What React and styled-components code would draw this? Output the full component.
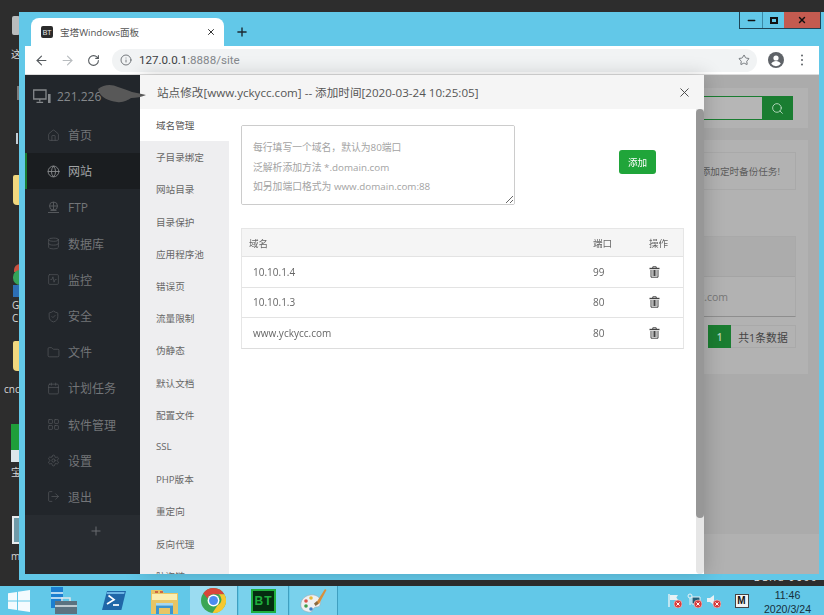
import React from "react"
import styled, { createGlobalStyle } from "styled-components"
import {
  ArrowLeft,
  ArrowRight,
  Calendar,
  Database,
  Folder,
  Globe,
  Home,
  Info,
  LayoutGrid,
  LogOut,
  Minus,
  Plus,
  RotateCw,
  Search,
  Settings,
  ShieldCheck,
  SquareActivity,
  Star,
  X,
} from "lucide-react"

const fonts = `"Open Sans", "Noto Sans CJK SC", sans-serif`

const colors = {
  sky: "#62c8e8",
  desk: "#2d2d2d",
  green: "#20a53a",
  dimGreen: "#1a7d31",
  side: "#22262b",
}

const GlobalStyle = createGlobalStyle`
  html, body {
    margin: 0;
    padding: 0;
    background: ${colors.desk};
  }
  * {
    box-sizing: border-box;
  }
`

const Desktop = styled.div`
  position: relative;
  width: 824px;
  height: 615px;
  display: flex;
  flex-direction: column;
  overflow: hidden;
  background: ${colors.desk};
  font-family: ${fonts};
`

const DeskArea = styled.div`
  flex: 1;
  min-height: 0;
  padding: 12px 0 6px 19px;
`

const DeskItem = styled.div`
  position: absolute;
  left: ${(p) => p.$left}px;
  top: ${(p) => p.$top}px;
  width: ${(p) => p.$w}px;
  height: ${(p) => p.$h}px;
  background: ${(p) => p.$bg || "transparent"};
  border-radius: ${(p) => p.$round || "0"};
`

const DeskLabel = styled.div`
  position: absolute;
  left: ${(p) => p.$left}px;
  top: ${(p) => p.$top}px;
  color: #d8d8d8;
  font-size: 10px;
  line-height: 12px;
  white-space: nowrap;
`

const BuildMark = styled.div`
  position: absolute;
  right: 6px;
  top: 571px;
  color: #e8e8e8;
  font-size: 10px;
  line-height: 12px;
  letter-spacing: 1.5px;
  white-space: nowrap;
`

const BrowserWindow = styled.div`
  position: relative;
  z-index: 1;
  width: 805px;
  height: 100%;
  padding: 0 5px 6px 6px;
  display: flex;
  flex-direction: column;
  background: ${colors.sky};
`

const TabStrip = styled.div`
  height: 34px;
  flex: none;
  display: flex;
  align-items: flex-end;
  padding-left: 6px;
`

const Tab = styled.div`
  width: 193px;
  height: 28px;
  display: flex;
  align-items: center;
  padding: 0 8px 0 10px;
  background: #fff;
  border-radius: 8px 8px 0 0;
  color: #555;
  font-size: 9.6px;
`

const Favicon = styled.span`
  width: 12px;
  height: 12px;
  margin-right: 7px;
  border-radius: 2px;
  background: #2b2b2b;
  color: #eee;
  font-size: 7.5px;
  line-height: 12px;
  text-align: center;
`

const TabTitle = styled.span`
  flex: 1;
`

const NewTab = styled.span`
  display: flex;
  align-self: center;
  margin: 6px 0 0 11px;
  color: #1c2a33;
`

const WindowControls = styled.div`
  display: flex;
  align-self: flex-start;
  height: 17px;
  margin: 0 -2px 0 auto;
  border: 1px solid #1d4557;
  border-top: 0;
`

const ControlButton = styled.div`
  width: ${(p) => (p.$close ? "36px" : "22px")};
  display: flex;
  align-items: center;
  justify-content: center;
  background: ${(p) => (p.$close ? "#c45b50" : "transparent")};
  border-left: ${(p) => (p.$first || p.$close ? "0" : "1px solid #3b8aa6")};
  color: #111;
`

const MaxGlyph = styled.span`
  width: 8px;
  height: 7px;
  border: 2px solid #111;
`

const Toolbar = styled.div`
  height: 29px;
  flex: none;
  display: flex;
  align-items: center;
  background: #fff;
  border-bottom: 1px solid #dcdcdc;
  padding-left: 3px;
`

const NavButton = styled.span`
  width: 26px;
  display: flex;
  justify-content: center;
  color: ${(p) => (p.$off ? "#b8bcbf" : "#555a5e")};
`

const AddressBar = styled.div`
  width: 645px;
  height: 23px;
  flex: none;
  display: flex;
  align-items: center;
  margin-left: 6px;
  padding: 0 7px 0 8px;
  border-radius: 12px;
  background: #f1f3f4;
  color: #5f6368;
  font-family: "Roboto", sans-serif;
  font-size: 11.6px;
`

const Url = styled.span`
  flex: 1;
  margin-left: 7px;
  color: #85898d;

  b {
    font-weight: 400;
    color: #3c3f43;
  }
`

const ToolIcon = styled.span`
  width: ${(p) => p.$w}px;
  display: flex;
  justify-content: center;
  color: #5f6368;
`

const Dots = styled.span`
  width: 2.4px;
  height: 2.4px;
  border-radius: 50%;
  background: #5f6368;
  box-shadow: 0 -4.5px 0 #5f6368, 0 4.5px 0 #5f6368;
`

const Content = styled.div`
  position: relative;
  flex: 1;
  min-height: 0;
  display: flex;
`

const Sidebar = styled.aside`
  position: relative;
  z-index: 3;
  width: 115px;
  flex: none;
  display: flex;
  flex-direction: column;
  background: ${colors.side};
`

const SideHead = styled.div`
  position: relative;
  height: 42px;
  flex: none;
  display: flex;
  align-items: center;
  padding-left: 8px;
  color: #85888b;
  font-size: 12px;
`

const HeadIp = styled.span`
  margin-left: 6px;
`

const Smudge = styled.svg`
  position: absolute;
  left: 72px;
  top: 9px;
`

const NavList = styled.nav`
  flex: 1;
  display: flex;
  flex-direction: column;
`

const NavItem = styled.div`
  height: 36.2px;
  display: flex;
  align-items: center;
  gap: 8px;
  padding-left: ${(p) => (p.$active ? "20px" : "22px")};
  border-left: ${(p) => (p.$active ? `2px solid ${colors.dimGreen}` : "0")};
  background: ${(p) => (p.$active ? "#1a1d20" : "transparent")};
  color: ${(p) => (p.$active ? "#a2a4a6" : "#737578")};
  font-size: 12px;

  svg {
    flex: none;
    color: ${(p) => (p.$active ? "#8b8d90" : "#55585c")};
  }
`

const AddMenu = styled.div`
  height: 59px;
  flex: none;
  display: flex;
  justify-content: center;
  padding: 9px 0 0 27px;
  background: #282c31;
  color: #6e7175;
`

const Main = styled.main`
  flex: 1;
  min-width: 0;
  display: flex;
  flex-direction: column;
  background: #ababab;
`

const MainBody = styled.div`
  flex: 1;
  padding: 13px 11px 0 15px;
`

const SearchPanel = styled.div`
  height: 40px;
  display: flex;
  padding: 8px 15px;
  background: #b2b2b2;
`

const SearchInput = styled.div`
  flex: 1;
  border: 1px solid ${colors.dimGreen};
  border-right: 0;
  background: #b6b6b6;
`

const SearchButton = styled.div`
  width: 31px;
  display: flex;
  align-items: center;
  justify-content: center;
  background: ${colors.dimGreen};
  color: #b8d8c0;
`

const ListPanel = styled.div`
  height: 234px;
  margin-top: 12px;
  padding: 12px;
  background: #b2b2b2;
`

const Notice = styled.div`
  height: 38px;
  display: flex;
  align-items: center;
  justify-content: flex-end;
  padding-right: 15px;
  border: 1px solid #a9a9a9;
  color: #5c5c5c;
  font-size: 9.6px;
`

const BackTable = styled.div`
  height: 81px;
  margin-top: 46px;
  border: 1px solid #a9a9a9;
  border-bottom: 1px solid #8e8e8e;
`

const BackHead = styled.div`
  height: 40px;
  background: #acacac;
  border-bottom: 1px solid #a4a4a4;
`

const BackRow = styled.div`
  height: 39px;
  display: flex;
  align-items: center;
  justify-content: flex-end;
  padding-right: 67px;
  color: #777;
  font-size: 10.5px;
`

const Pager = styled.div`
  height: 23px;
  margin-top: 8px;
  display: flex;
  justify-content: flex-end;
`

const PagerNow = styled.span`
  width: 23px;
  display: flex;
  align-items: center;
  justify-content: center;
  background: ${colors.dimGreen};
  color: #b5d3bc;
  font-size: 10px;
  font-weight: 600;
`

const PagerInfo = styled.span`
  width: 65px;
  display: flex;
  align-items: center;
  justify-content: center;
  border: 1px solid #a9a9a9;
  border-left: 0;
  color: #444;
  font-size: 10.8px;
`

const MainFooter = styled.div`
  height: 40px;
  flex: none;
  background: #b1b1b1;
`

const Modal = styled.section`
  position: absolute;
  z-index: 2;
  left: 115px;
  top: 0;
  bottom: 0;
  width: 564px;
  display: flex;
  flex-direction: column;
  background: #fff;
  box-shadow: 2px 0 18px rgba(0, 0, 0, 0.18);
`

const ModalHead = styled.header`
  height: 34px;
  flex: none;
  display: flex;
  align-items: center;
  justify-content: space-between;
  padding: 0 12px 0 17px;
  background: #f5f5f5;
  color: #555;
  font-size: 11.6px;
`

const CloseButton = styled.span`
  display: flex;
  color: #444;
`

const ModalBody = styled.div`
  flex: 1;
  min-height: 0;
  display: flex;
`

const SideMenu = styled.ul`
  width: 89px;
  flex: none;
  margin: 0;
  padding: 0;
  list-style: none;
  overflow: hidden;
  background: #eeeef0;
`

const MenuItem = styled.li`
  height: 32.2px;
  display: flex;
  align-items: center;
  padding-left: 16px;
  flex: none;
  background: ${(p) => (p.$active ? "#fff" : "transparent")};
  color: ${(p) => (p.$active ? "#555" : "#666")};
  font-size: 9.6px;
`

const Pane = styled.div`
  flex: 1;
  min-width: 0;
  padding: 16px 12px 0;
`

const AddRow = styled.div`
  display: flex;
  align-items: flex-start;
`

const DomainInput = styled.textarea`
  width: 274px;
  height: 80px;
  flex: none;
  margin: 0;
  padding: 12px 11px;
  border: 1px solid #ccc;
  border-radius: 2px;
  outline: none;
  background: #fff;
  font-family: ${fonts};
  font-size: 9.8px;
  line-height: 19.6px;

  &::placeholder {
    color: #a3a3a3;
    opacity: 1;
  }
`

const AddButton = styled.button`
  width: 37px;
  height: 24px;
  margin: 25px 0 0 104px;
  padding: 0;
  border: 0;
  border-radius: 3px;
  background: ${colors.green};
  color: #fff;
  font-family: ${fonts};
  font-size: 9.6px;
`

const DomainTable = styled.div`
  width: 443px;
  margin-top: 23px;
  border: 1px solid #e6e6e6;
  border-bottom-color: #ddd;
`

const TableRow = styled.div`
  height: ${(p) => (p.$head ? "27px" : "30.6px")};
  display: grid;
  grid-template-columns: 344px 56px 1fr;
  align-items: center;
  padding-left: 7px;
  background: ${(p) => (p.$head ? "#f5f5f5" : "#fff")};
  border-top: ${(p) => (p.$head ? "0" : "1px solid #e3e3e3")};
  color: #666;
  font-size: ${(p) => (p.$head ? "9.6px" : "10px")};
`

const NameCell = styled.span`
  padding-left: ${(p) => (p.$head ? "0" : "4px")};
`

const ActionCell = styled.span`
  display: flex;
`

const ScrollTrack = styled.div`
  width: 8px;
  flex: none;
  background: #e6e6e6;
  border-radius: 0 0 4px 4px;
`

const ScrollThumb = styled.div`
  height: 409px;
  border-radius: 4px;
  background: #979797;
`

const Taskbar = styled.footer`
  position: relative;
  z-index: 1;
  height: 29px;
  flex: none;
  display: flex;
  align-items: center;
  background: ${colors.sky};
`

const StartSlot = styled.span`
  width: ${(p) => p.$w}px;
  height: 100%;
  flex: none;
  display: flex;
  align-items: center;
  justify-content: center;
`

const RunningSlot = styled(StartSlot)`
  background: ${(p) => (p.$hot ? "#9bdcf1" : "#79d1ec")};
  border-right: 1px solid #3f9fc0;
  margin-right: 1px;
`

const BtTile = styled.span`
  width: 25px;
  height: 24px;
  display: flex;
  align-items: center;
  justify-content: center;
  background: #052d10;
  border: 2px solid #1fae3d;
  color: #1fae3d;
  font-family: "Liberation Sans", sans-serif;
  font-size: 12px;
  font-weight: 700;
  letter-spacing: 1px;
`

const Tray = styled.div`
  height: 100%;
  margin-left: auto;
  display: flex;
  align-items: center;
`

const TrayIcon = styled.span`
  width: ${(p) => p.$w || 19.5}px;
  display: flex;
  justify-content: center;
`

const ImeBox = styled.span`
  width: 14px;
  height: 14px;
  margin: 0 2.5px 0 11px;
  display: flex;
  align-items: center;
  justify-content: center;
  background: #f4f4f4;
  border: 1px solid #444;
  color: #111;
  font-family: "Liberation Sans", sans-serif;
  font-size: 10px;
  font-weight: 700;
`

const Clock = styled.div`
  width: 73px;
  margin-top: 3px;
  color: #16303c;
  font-family: "Liberation Sans", sans-serif;
  font-size: 10.6px;
  line-height: 14px;
  text-align: center;
`

const TrashIcon = () => (
  <svg width="11" height="12" viewBox="0 0 11 12" fill="none" stroke="#444">
    <path d="M0.5 2.5h10" strokeWidth="1.4" />
    <path d="M3.8 2V0.8h3.4V2" strokeWidth="1" />
    <path d="M2 4v7.2h7V4M4.1 4v6M5.5 4v6M6.9 4v6" strokeWidth="1" />
  </svg>
)

const FtpIcon = () => (
  <svg width="13" height="13" viewBox="0 0 13 13" fill="none" stroke="currentColor">
    <circle cx="6.5" cy="5" r="4" />
    <path d="M2.5 5h8M6.5 1v8M1 11.5h11M3.5 9.5h6" />
  </svg>
)

const ServerMonitor = () => (
  <svg width="18" height="15" viewBox="0 0 18 15" fill="none" stroke="currentColor">
    <path d="M0.7 1h12.3v9H0.7z" strokeWidth="1.3" />
    <path d="M6.8 10v2.5M3.5 13.4h6.6" strokeWidth="1.3" />
    <path d="M15 5h2.6v9H15z" fill="currentColor" stroke="none" />
  </svg>
)

const AvatarIcon = () => (
  <svg width="16" height="16" viewBox="0 0 16 16">
    <circle cx="8" cy="8" r="8" fill="#5f6368" />
    <circle cx="8" cy="6" r="2.6" fill="#fff" />
    <path d="M3.2 11.8c1-1.9 3-2.7 4.8-2.7s3.8.8 4.8 2.7a6 6 0 0 1-9.6 0z" fill="#fff" />
  </svg>
)

const WindowsLogo = () => (
  <svg width="22" height="22" viewBox="0 0 22 22" fill="#f4fbfe">
    <path d="M0 3.2 9 2v8.4H0zM10 1.8 22 0v10.4H10zM0 11.6h9V20L0 18.8zM10 11.6h12V22l-12-1.8z" />
  </svg>
)

const ServerManager = () => (
  <svg width="27" height="27" viewBox="0 0 27 27">
    <path d="M1 0h12v21H1z" fill="#1c7fd0" />
    <path d="M1 6h12M1 11h12" stroke="#e8f6fc" strokeWidth="1.4" />
    <path d="M5 14h22v13H5z" fill="#5b7280" />
    <path d="M12 14v-3h8v3" fill="none" stroke="#dfe7ea" strokeWidth="1.5" />
    <path d="M5 19h22" stroke="#d8e0e4" strokeWidth="1.6" />
  </svg>
)

const PowerShell = () => (
  <svg width="24" height="19" viewBox="0 0 24 19">
    <path d="M5 0h19l-4.6 19H0z" fill="#1f67a8" />
    <path d="M5 1h17.6l-.4 2H4.6z" fill="#6ab4e4" />
    <path d="M6.5 4.5 12 8.6 5 13" fill="none" stroke="#fff" strokeWidth="1.7" />
    <path d="M11 14h6" stroke="#fff" strokeWidth="1.7" />
  </svg>
)

const FolderIcon = () => (
  <svg width="27" height="27" viewBox="0 0 27 27">
    <path d="M0 3h11l2 3h14v21H0z" fill="#e8c565" />
    <path d="M1 7h25v6H1z" fill="#fbeeb2" />
    <path d="M4 5h3M9 5h3" stroke="#c2473b" strokeWidth="1.4" />
    <path d="M5 18h17v9h-3v-6H8v6H5z" fill="#3d95cf" />
    <path d="M5 16h17v2.6H5z" fill="#a8d7ef" />
  </svg>
)

const ChromeLogo = () => (
  <svg width="25" height="25" viewBox="0 0 24 24">
    <circle cx="12" cy="12" r="12" fill="#3aa655" />
    <path d="M12 0a12 12 0 0 1 10.4 6H12a6 6 0 0 0-5.7 4.1L2.2 5.1A12 12 0 0 1 12 0z" fill="#d9463a" />
    <path d="M22.4 6A12 12 0 0 1 11 24l4.9-7.5A6 6 0 0 0 17 6z" fill="#f6c82f" />
    <circle cx="12" cy="12" r="5.7" fill="#fff" />
    <circle cx="12" cy="12" r="4.3" fill="#4c8bf0" />
  </svg>
)

const PaintIcon = () => (
  <svg width="27" height="26" viewBox="0 0 27 26">
    <path d="M1 15c1-6 8-9 13-8 5 1 8 5 6 10-1 3-4 1-6 3s-1 5-6 4c-5-1-8-4-7-9z" fill="#eef0f2" stroke="#9aa7ae" strokeWidth="0.6" />
    <circle cx="6" cy="13" r="1.8" fill="#d9534a" />
    <circle cx="11" cy="10" r="1.8" fill="#e8b93a" />
    <circle cx="6" cy="18" r="1.8" fill="#3f9d4c" />
    <circle cx="11" cy="21" r="1.8" fill="#3d7fc9" />
    <path d="M16 15 25 1l1.5 1L19 16z" fill="#d88f3c" />
    <path d="M14 15.5 17 13l1.5 3-3 2z" fill="#8a6a3f" />
  </svg>
)

const BadgeX = () => (
  <>
    <circle cx="11" cy="11" r="4" fill="#d63b3b" stroke="#f3d5d5" strokeWidth="0.6" />
    <path d="M9.4 9.4l3.2 3.2M12.6 9.4l-3.2 3.2" stroke="#fff" strokeWidth="1" />
  </>
)

const FlagTray = () => (
  <svg width="15" height="15" viewBox="0 0 15 15">
    <path d="M2 1v13" stroke="#e8f2f5" strokeWidth="1.4" />
    <path d="M3 2h8l-1.6 2.5L11 7H3z" fill="#e8f2f5" />
    <BadgeX />
  </svg>
)

const NetworkTray = () => (
  <svg width="15" height="15" viewBox="0 0 15 15">
    <path d="M5 4h8v7H5z" fill="#1f5d78" stroke="#e8f2f5" />
    <circle cx="3" cy="3" r="2" fill="none" stroke="#e8f2f5" />
    <path d="M3 5v7" stroke="#e8f2f5" />
    <BadgeX />
  </svg>
)

const SpeakerTray = () => (
  <svg width="15" height="15" viewBox="0 0 15 15">
    <path d="M1 5h3l4-3v10L4 9H1z" fill="#e8f2f5" />
    <BadgeX />
  </svg>
)

const navItems = [
  { label: "首页", icon: <Home size={13} strokeWidth={1.3} /> },
  { label: "网站", icon: <Globe size={13} strokeWidth={1.6} />, active: true },
  { label: "FTP", icon: <FtpIcon /> },
  { label: "数据库", icon: <Database size={13} strokeWidth={1.3} /> },
  { label: "监控", icon: <SquareActivity size={13} strokeWidth={1.2} /> },
  { label: "安全", icon: <ShieldCheck size={13} strokeWidth={1.3} /> },
  { label: "文件", icon: <Folder size={13} strokeWidth={1.3} /> },
  { label: "计划任务", icon: <Calendar size={13} strokeWidth={1.3} /> },
  { label: "软件管理", icon: <LayoutGrid size={13} strokeWidth={1.3} /> },
  { label: "设置", icon: <Settings size={13} strokeWidth={1.3} /> },
  { label: "退出", icon: <LogOut size={13} strokeWidth={1.3} /> },
]

const menuItems = [
  "域名管理",
  "子目录绑定",
  "网站目录",
  "目录保护",
  "应用程序池",
  "错误页",
  "流量限制",
  "伪静态",
  "默认文档",
  "配置文件",
  "SSL",
  "PHP版本",
  "重定向",
  "反向代理",
  "防盗链",
]

const domains = [
  { name: "10.10.1.4", port: 99 },
  { name: "10.10.1.3", port: 80 },
  { name: "www.yckycc.com", port: 80 },
]

const App = () => {
  return (
    <Desktop>
      <GlobalStyle />

      <DeskItem $left={12} $top={16} $w={8} $h={19} $bg="#b9bcbd" $round="2px" />
      <DeskLabel $left={11} $top={48}>这</DeskLabel>
      <DeskItem $left={17} $top={86} $w={2} $h={14} $bg="#7d7d7d" />
      <DeskItem $left={16} $top={133} $w={2} $h={11} $bg="#c4ced6" />
      <DeskItem $left={13} $top={175} $w={7} $h={30} $bg="#f0d77e" $round="2px 0 0 4px" />
      <DeskItem $left={14} $top={264} $w={6} $h={8} $bg="#c9503f" $round="6px 0 0 0" />
      <DeskItem $left={13} $top={270} $w={7} $h={15} $bg="#35a35a" $round="7px 0 0 7px" />
      <DeskItem $left={13} $top={285} $w={7} $h={12} $bg="#2d6fb5" />
      <DeskLabel $left={12} $top={299}>G</DeskLabel>
      <DeskLabel $left={12} $top={312}>C</DeskLabel>
      <DeskItem $left={13} $top={341} $w={7} $h={30} $bg="#f0d77e" $round="2px 0 0 4px" />
      <DeskLabel $left={4} $top={383}>cnc</DeskLabel>
      <DeskItem $left={11} $top={424} $w={9} $h={26} $bg="#1f9e3a" />
      <DeskItem $left={11} $top={450} $w={9} $h={12} $bg="#dde6ea" />
      <DeskLabel $left={11} $top={466}>宝</DeskLabel>
      <DeskItem $left={12} $top={516} $w={8} $h={28} $bg="#e6ebee" />
      <DeskItem $left={14} $top={518} $w={6} $h={24} $bg="#6f9aa8" />
      <DeskLabel $left={11} $top={550}>m</DeskLabel>
      <BuildMark>Build 9600</BuildMark>

      <DeskArea>
        <BrowserWindow>
          <TabStrip>
            <Tab>
              <Favicon>BT</Favicon>
              <TabTitle>宝塔Windows面板</TabTitle>
              <X size={10} strokeWidth={2.4} color="#333" />
            </Tab>
            <NewTab>
              <Plus size={14} strokeWidth={2.4} />
            </NewTab>
            <WindowControls>
              <ControlButton $first>
                <Minus size={11} strokeWidth={3} />
              </ControlButton>
              <ControlButton>
                <MaxGlyph />
              </ControlButton>
              <ControlButton $close>
                <X size={10} strokeWidth={3.4} />
              </ControlButton>
            </WindowControls>
          </TabStrip>

          <Toolbar>
            <NavButton>
              <ArrowLeft size={15} strokeWidth={1.8} />
            </NavButton>
            <NavButton $off>
              <ArrowRight size={15} strokeWidth={1.8} />
            </NavButton>
            <NavButton>
              <RotateCw size={13} strokeWidth={2} />
            </NavButton>
            <AddressBar>
              <Info size={12} strokeWidth={1.7} />
              <Url>
                <b>127.0.0.1</b>:8888/site
              </Url>
              <Star size={12} strokeWidth={1.7} />
            </AddressBar>
            <ToolIcon $w={38}>
              <AvatarIcon />
            </ToolIcon>
            <ToolIcon $w={14}>
              <Dots />
            </ToolIcon>
          </Toolbar>

          <Content>
            <Sidebar>
              <SideHead>
                <ServerMonitor />
                <HeadIp>221.226</HeadIp>
                <Smudge width="50" height="20" viewBox="0 0 50 20">
                  <path
                    d="M1 5c6-5 14-5 20-2 5 2 10 3 14 5 5 1 10 2 14 3-4 2-10 3-15 3-3 2-8 5-14 4C12 17 3 14 1 5z"
                    fill="#585858"
                  />
                </Smudge>
              </SideHead>
              <NavList>
                {navItems.map((item) => (
                  <NavItem key={item.label} $active={item.active}>
                    {item.icon}
                    {item.label}
                  </NavItem>
                ))}
              </NavList>
              <AddMenu>
                <Plus size={14} strokeWidth={1.6} />
              </AddMenu>
            </Sidebar>

            <Main>
              <MainBody>
                <SearchPanel>
                  <SearchInput />
                  <SearchButton>
                    <Search size={13} strokeWidth={1.7} />
                  </SearchButton>
                </SearchPanel>
                <ListPanel>
                  <Notice>您当前未添加定时备份任务!</Notice>
                  <BackTable>
                    <BackHead />
                    <BackRow>www.yckycc.com</BackRow>
                  </BackTable>
                  <Pager>
                    <PagerNow>1</PagerNow>
                    <PagerInfo>共1条数据</PagerInfo>
                  </Pager>
                </ListPanel>
              </MainBody>
              <MainFooter />
            </Main>

            <Modal>
              <ModalHead>
                站点修改[www.yckycc.com] -- 添加时间[2020-03-24 10:25:05]
                <CloseButton>
                  <X size={15} strokeWidth={1.5} />
                </CloseButton>
              </ModalHead>
              <ModalBody>
                <SideMenu>
                  {menuItems.map((item, i) => (
                    <MenuItem key={item} $active={i === 0}>
                      {item}
                    </MenuItem>
                  ))}
                </SideMenu>
                <Pane>
                  <AddRow>
                    <DomainInput
                      readOnly
                      placeholder={
                        "每行填写一个域名，默认为80端口\n泛解析添加方法 *.domain.com\n如另加端口格式为 www.domain.com:88"
                      }
                    />
                    <AddButton>添加</AddButton>
                  </AddRow>
                  <DomainTable>
                    <TableRow $head>
                      <NameCell $head>域名</NameCell>
                      <span>端口</span>
                      <ActionCell>操作</ActionCell>
                    </TableRow>
                    {domains.map((d) => (
                      <TableRow key={d.name}>
                        <NameCell>{d.name}</NameCell>
                        <span>{d.port}</span>
                        <ActionCell>
                          <TrashIcon />
                        </ActionCell>
                      </TableRow>
                    ))}
                  </DomainTable>
                </Pane>
                <ScrollTrack>
                  <ScrollThumb />
                </ScrollTrack>
              </ModalBody>
            </Modal>
          </Content>
        </BrowserWindow>
      </DeskArea>

      <Taskbar>
        <StartSlot $w={38}>
          <WindowsLogo />
        </StartSlot>
        <StartSlot $w={50}>
          <ServerManager />
        </StartSlot>
        <StartSlot $w={51}>
          <PowerShell />
        </StartSlot>
        <StartSlot $w={51}>
          <FolderIcon />
        </StartSlot>
        <RunningSlot $w={48} $hot>
          <ChromeLogo />
        </RunningSlot>
        <RunningSlot $w={50}>
          <BtTile>BT</BtTile>
        </RunningSlot>
        <RunningSlot $w={48}>
          <PaintIcon />
        </RunningSlot>
        <Tray>
          <TrayIcon>
            <FlagTray />
          </TrayIcon>
          <TrayIcon>
            <NetworkTray />
          </TrayIcon>
          <TrayIcon>
            <SpeakerTray />
          </TrayIcon>
          <ImeBox>M</ImeBox>
          <Clock>
            11:46
            <br />
            2020/3/24
          </Clock>
        </Tray>
      </Taskbar>
    </Desktop>
  )
}

export default App
